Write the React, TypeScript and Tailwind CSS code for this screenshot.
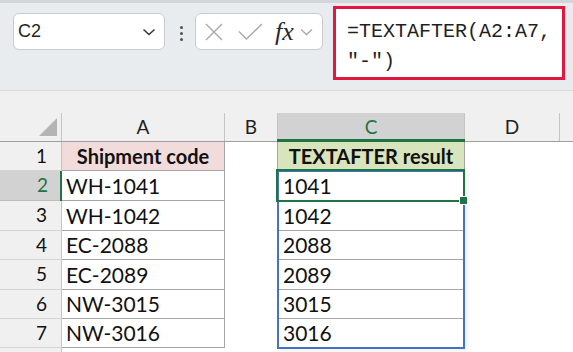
import React from "react";

const FONT = { fontFamily: "Lato, 'Open Sans', sans-serif" };

const rowsA = ["WH-1041", "WH-1042", "EC-2088", "EC-2089", "NW-3015", "NW-3016"];
const rowsC = ["1041", "1042", "2088", "2089", "3015", "3016"];
const heights = [30, 30, 29, 30, 29, 29];

function Toolbar() {
  return (
    <div className="relative flex h-[91px] items-start border-b border-[#d6d9dd] border-t-[3px] border-t-[#d2d5d9] bg-[#e9ecef]">
      <div
        className="ml-[13px] mt-[10px] flex h-[37px] w-[152px] items-center justify-between rounded-[6px] border border-[#c9cbce] bg-white pl-[4px] pr-[8px] text-[18px] text-[#1f1f1f]"
        style={{ fontFamily: "'Liberation Sans', Arial, sans-serif" }}
      >
        <span>C2</span>
        <svg width="14" height="10" viewBox="0 0 14 10" fill="none" stroke="#3a3a3a" strokeWidth="1.6">
          <path d="M1.5 2.5 L7 7.5 L12.5 2.5" />
        </svg>
      </div>
      <div className="ml-[13px] mt-[23px] flex w-[6px] flex-col items-center gap-[3px]">
        <span className="h-[3px] w-[3px] rounded-full bg-[#505050]" />
        <span className="h-[3px] w-[3px] rounded-full bg-[#505050]" />
        <span className="h-[3px] w-[3px] rounded-full bg-[#505050]" />
      </div>
      <div className="ml-[11px] mt-[10px] flex h-[37px] w-[128px] items-center rounded-[6px] border border-[#c9cbce] bg-white">
        <svg className="ml-[9px]" width="18" height="18" viewBox="0 0 18 18" fill="none" stroke="#a9a9a9" strokeWidth="1.4">
          <path d="M1 1 L17 17 M17 1 L1 17" />
        </svg>
        <svg className="ml-[15px]" width="25" height="17" viewBox="0 0 25 17" fill="none" stroke="#a9a9a9" strokeWidth="1.4">
          <path d="M1 8.5 L8.5 16 L24 1" />
        </svg>
        <span
          className="ml-[12px] text-[26px] italic leading-none text-[#2a2a2a]"
          style={{ fontFamily: "'Liberation Serif', 'Times New Roman', serif" }}
        >
          fx
        </span>
        <svg className="ml-[6px]" width="13" height="8" viewBox="0 0 13 8" fill="none" stroke="#a9a9a9" strokeWidth="1.3">
          <path d="M1 1.5 L6.5 6.5 L12 1.5" />
        </svg>
      </div>
      <div
        className="ml-[10px] mt-[3px] h-[74px] w-[232px] border-[3.5px] border-[#e2173f] bg-white pl-[11px] pt-[8px] text-[20px] leading-[30px] text-[#1f1f1f]"
        style={{ fontFamily: "'Liberation Mono', 'DejaVu Sans Mono', monospace" }}
      >
        =TEXTAFTER(A2:A7,
        <br />
        "-")
      </div>
    </div>
  );
}

function HeaderRow() {
  return (
    <div className="flex h-[29px] border-b border-[#9f9f9f] bg-[#f0f0f0] text-[19px] text-[#1f1f1f]">
      <div className="relative w-[62px] border-r border-[#c4c4c4]">
        <svg className="absolute left-[39px] top-[5px]" width="18" height="18" viewBox="0 0 18 18">
          <path d="M18 0 L18 18 L0 18 Z" fill="#b4b4b4" />
        </svg>
      </div>
      <div className="flex w-[163px] items-center justify-center border-r border-[#c4c4c4]">A</div>
      <div className="flex w-[53px] items-center justify-center border-r border-[#c4c4c4]">B</div>
      <div className="relative flex w-[187px] items-center justify-center border-r border-[#c4c4c4] bg-[#d2d2d2] text-[#217346]">
        C
        <div className="absolute bottom-[-1px] left-[-1px] right-[-1px] h-[3px] bg-[#217346]" />
      </div>
      <div className="flex w-[95px] items-center justify-center border-r border-[#c4c4c4]">D</div>
      <div className="flex-1" />
    </div>
  );
}

export default function App() {
  return (
    <div className="h-[352px] w-[573px] overflow-hidden bg-white" style={FONT}>
      <Toolbar />
      <div className="h-[22px] bg-[#f0f0f0]" />
      <HeaderRow />
      {/* Row 1 */}
      <div className="flex h-[29px] text-[20px] text-[#111]">
        <div className="flex w-[62px] items-center justify-end border-b border-r border-b-[#d4d4d4] border-r-[#c4c4c4] bg-[#f0f0f0] pr-[14px] text-[19px]">
          1
        </div>
        <div className="flex w-[163px] items-center justify-center border-b border-r border-[#a6a6a6] bg-[#f2dcdb] font-bold">
          Shipment code
        </div>
        <div className="w-[52px]" />
        <div className="flex w-[188px] items-center justify-center border-x border-b border-[#a6a6a6] bg-[#d8e4bc] font-bold">
          TEXTAFTER result
        </div>
        <div className="flex-1" />
      </div>
      {/* Rows 2-7 */}
      <div className="relative">
        {rowsA.map((a, i) => {
          const sel = i === 0;
          return (
            <div key={i} className="flex text-[21px] text-[#111]" style={{ height: heights[i] }}>
              <div
                className={
                  sel
                    ? "relative flex w-[62px] items-center justify-end border-b border-b-[#bcbcbc] bg-[#d2d2d2] pr-[14px] text-[19px] text-[#217346]"
                    : "flex w-[62px] items-center justify-end border-b border-r border-b-[#d4d4d4] border-r-[#c4c4c4] bg-[#f0f0f0] pr-[14px] text-[19px]"
                }
              >
                {i + 2}
                {sel && <div className="absolute bottom-[-1px] right-0 top-0 w-[2px] bg-[#217346]" />}
              </div>
              <div className="flex w-[163px] items-center border-b border-r border-[#a6a6a6] pl-[4px]">{a}</div>
              <div className="w-[52px]" />
              <div className="flex w-[188px] items-center border-b border-[#a6a6a6] pl-[6px]">{rowsC[i]}</div>
              <div className="flex-1" />
            </div>
          );
        })}
        {/* spill range border */}
        <div className="pointer-events-none absolute left-[277px] top-[-1px] h-[179px] w-[188px] border-2 border-[#4472c4] shadow-[3px_2px_4px_rgba(0,0,0,0.06)]" />
        {/* selection */}
        <div className="pointer-events-none absolute left-[276px] top-[-2px] h-[33px] w-[189px] border-[2.5px] border-[#217346]" />
        <div className="pointer-events-none absolute left-[459px] top-[25px] h-[9px] w-[9px] border border-white bg-[#217346]" />
      </div>
      {/* Row 8 */}
      <div className="flex h-[10px]">
        <div className="w-[62px] border-r border-[#c4c4c4] bg-[#f0f0f0]" />
      </div>
    </div>
  );
}
